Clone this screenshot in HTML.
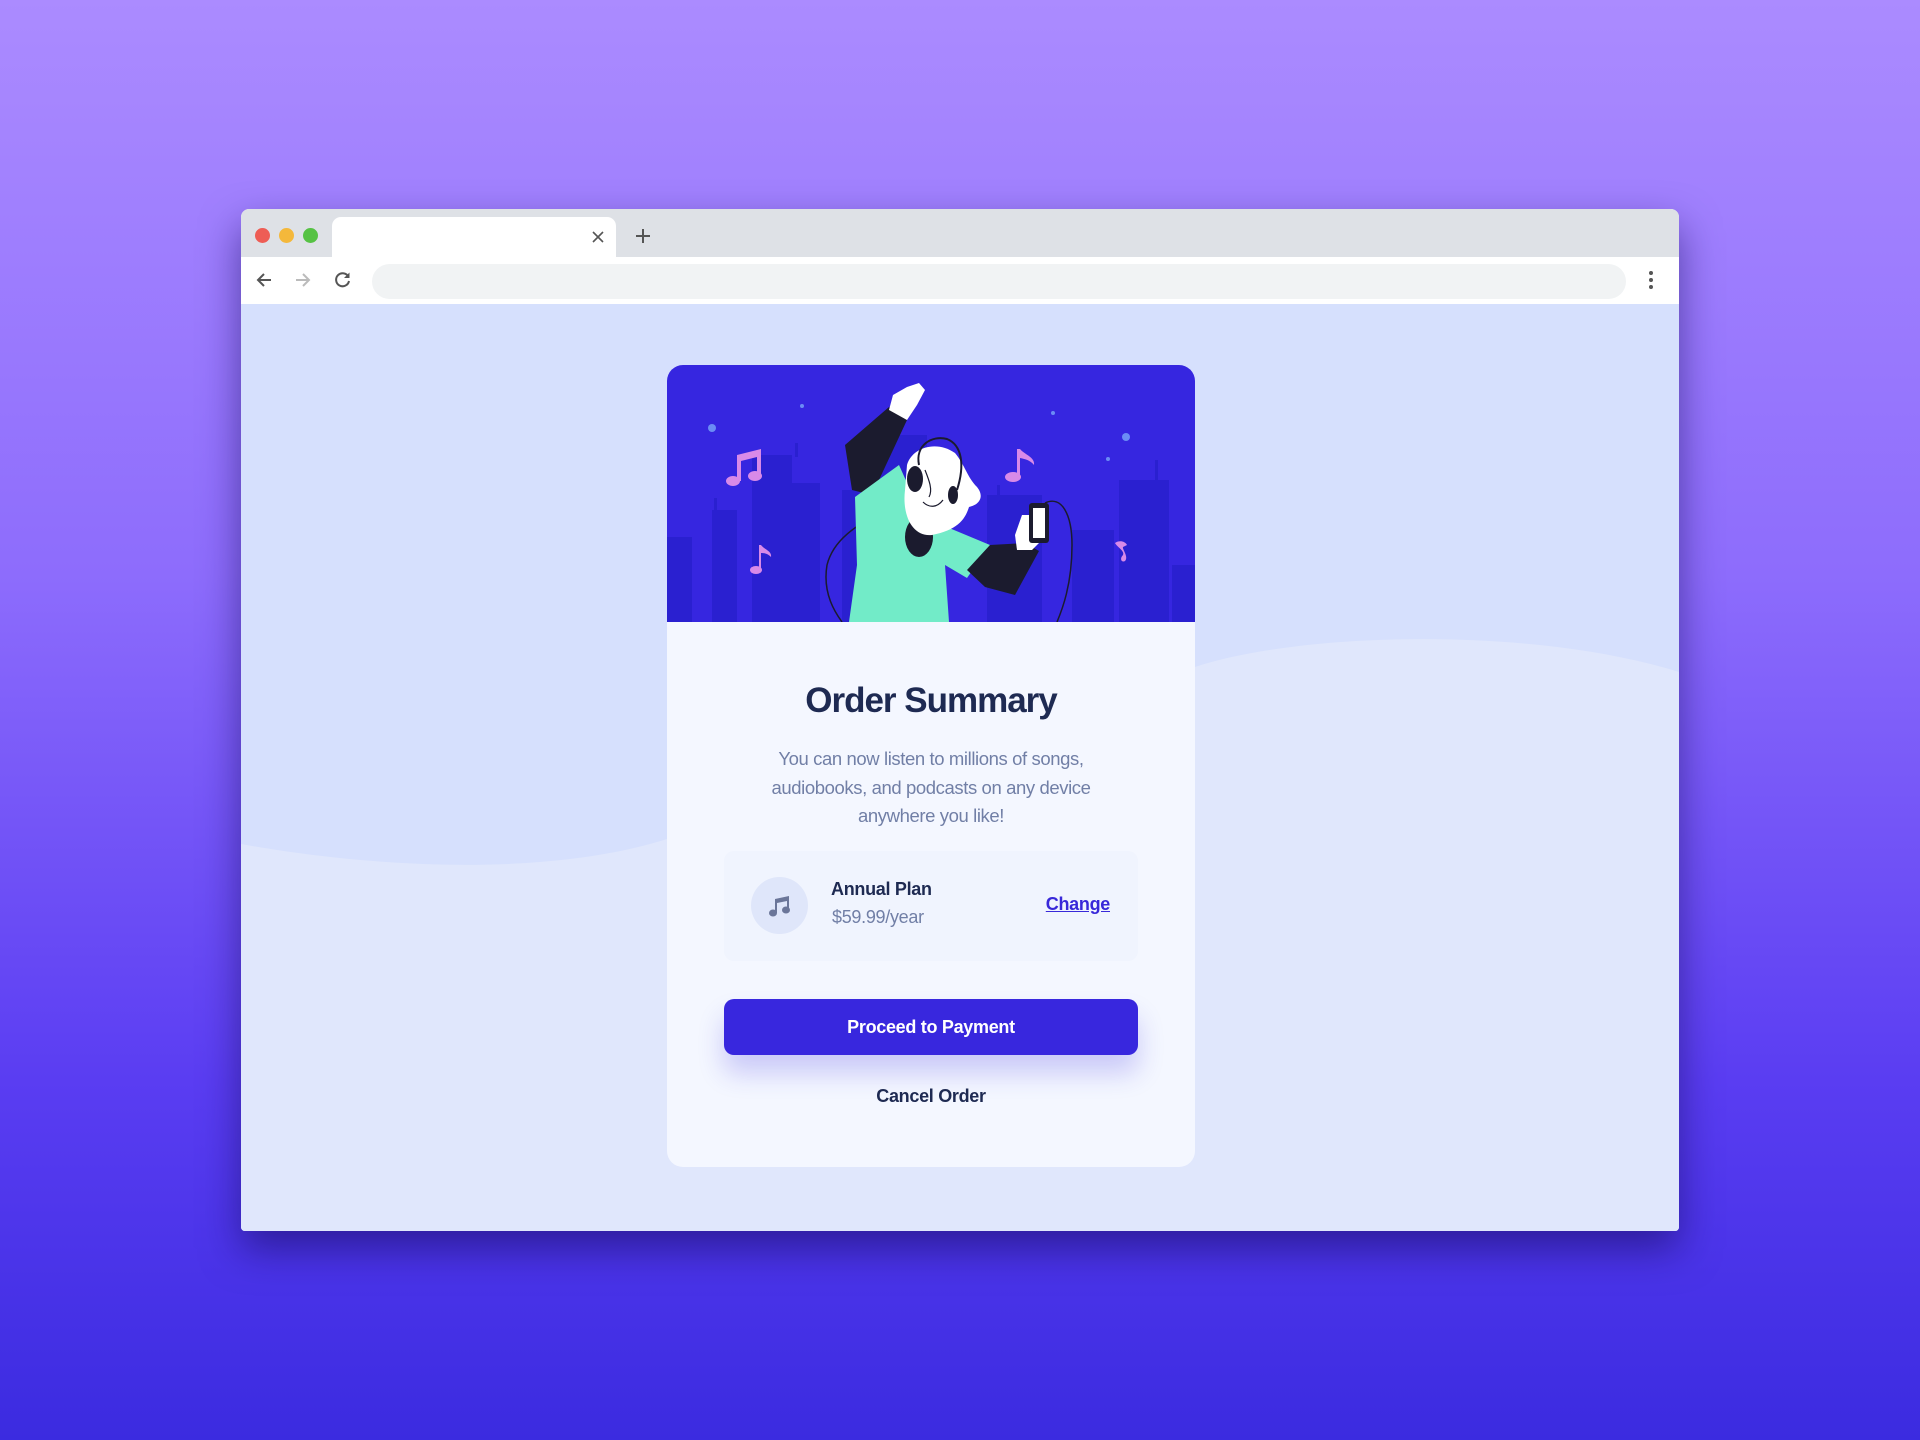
<!DOCTYPE html>
<html><head><meta charset="utf-8">
<style>
*{margin:0;padding:0;box-sizing:border-box}
html,body{width:1920px;height:1440px;overflow:hidden}
body{background:linear-gradient(180deg,#ab8bff 0%,#8d6cfc 40%,#5a3df2 75%,#3b2be0 100%);font-family:"Liberation Sans",sans-serif;position:relative}
.win{position:absolute;left:241px;top:209px;width:1438px;height:1022px;background:#e0e7fc;border-radius:8px 8px 4px 4px;overflow:hidden;box-shadow:0 18px 40px rgba(20,10,90,.55)}
.tabbar{position:absolute;left:0;top:0;width:100%;height:48px;background:#dee1e6}
.dot{position:absolute;top:19px;width:15px;height:15px;border-radius:50%}
.tab{position:absolute;left:91px;top:8px;width:284px;height:40px;background:#fff;border-radius:9px 9px 0 0}
.nav{position:absolute;left:0;top:48px;width:100%;height:47px;background:#fff}
.addr{position:absolute;left:131px;top:7px;width:1254px;height:35px;background:#f1f3f4;border-radius:18px}
.content{position:absolute;left:0;top:95px;width:1438px;height:927px;background:#d6e0fd}
.card{position:absolute;left:667px;top:365px;width:528px;height:802px;background:#f4f7ff;border-radius:16px;overflow:hidden;text-align:center}
h1{position:absolute;top:681px;left:667px;width:528px;text-align:center;font-size:35px;font-weight:bold;color:#1e2a52;letter-spacing:-1px}
.p{position:absolute;top:745px;left:667px;width:528px;text-align:center;font-size:18.5px;line-height:28.5px;color:#717fa6;letter-spacing:-0.4px}
.plan{position:absolute;left:724px;top:851px;width:414px;height:110px;background:#f0f4fe;border-radius:10px}
.ic{position:absolute;left:27px;top:26px;width:57px;height:57px;border-radius:50%;background:#dfe6fa}
.pt{position:absolute;left:107px;top:28px;font-size:18px;font-weight:bold;color:#1e2a52;letter-spacing:-0.3px}
.pp{position:absolute;left:108px;top:56px;font-size:18px;color:#717fa6;letter-spacing:-0.3px}
.ch{position:absolute;right:28px;top:43px;font-size:18px;font-weight:bold;color:#3828d9;text-decoration:underline;letter-spacing:-0.3px}
.btn{position:absolute;left:724px;top:999px;width:414px;height:56px;background:#3827de;border-radius:10px;color:#fff;font-size:18px;font-weight:bold;line-height:56px;text-align:center;box-shadow:0 18px 26px rgba(56,39,222,.22);letter-spacing:-0.3px}
.cancel{position:absolute;left:724px;top:1086px;width:414px;text-align:center;font-size:18px;font-weight:bold;color:#1e2a52;letter-spacing:-0.3px}
</style></head><body>
<div class="win">
 <div class="tabbar">
  <div class="dot" style="left:14px;background:#ee5d55"></div>
  <div class="dot" style="left:38px;background:#f4b83b"></div>
  <div class="dot" style="left:62px;background:#56c244"></div>
  <div class="tab"><svg style="position:absolute;left:260px;top:14px" width="12" height="12" viewBox="0 0 12 12"><path d="M1 1L11 11M11 1L1 11" stroke="#555" stroke-width="1.6"/></svg></div>
  <svg style="position:absolute;left:394px;top:19px" width="16" height="16" viewBox="0 0 16 16"><path d="M8 1V15M1 8H15" stroke="#555" stroke-width="2"/></svg>
 </div>
 <div class="nav">
  <svg style="position:absolute;left:14px;top:14px" width="18" height="18" viewBox="0 0 18 18"><path d="M16 9H3M9 3L3 9L9 15" stroke="#555" stroke-width="2" fill="none"/></svg>
  <svg style="position:absolute;left:53px;top:14px" width="18" height="18" viewBox="0 0 18 18"><path d="M2 9H15M9 3L15 9L9 15" stroke="#bbb" stroke-width="2" fill="none"/></svg>
  <svg style="position:absolute;left:93px;top:14px" width="18" height="18" viewBox="0 0 18 18"><path d="M14.5 6A6.5 6.5 0 1 0 15 10" stroke="#555" stroke-width="2" fill="none"/><path d="M15.5 1.5V7H10Z" fill="#555"/></svg>
  <div class="addr"></div>
  <svg style="position:absolute;left:1407px;top:13px" width="6" height="20" viewBox="0 0 6 20"><circle cx="3" cy="3" r="2" fill="#555"/><circle cx="3" cy="10" r="2" fill="#555"/><circle cx="3" cy="17" r="2" fill="#555"/></svg>
 </div>
 <div class="content">
  <svg width="1438" height="927" viewBox="0 0 1438 927" style="position:absolute;left:0;top:0"><path d="M0,540 C120,562 300,575 426,535 L954,363 C1060,328 1290,322 1438,368 L1438,927 L0,927 Z" fill="#e0e7fc"/></svg>
 </div>
</div>
<div class="card">
 <svg width="528" height="257" viewBox="0 0 528 257" style="display:block">
  <rect width="528" height="257" fill="#3626e0"/>
  <g fill="#2a20d0">
   <rect x="0" y="172" width="25" height="85"/>
   <rect x="45" y="145" width="25" height="112"/><rect x="47" y="133" width="3" height="14"/>
   <rect x="85" y="90" width="40" height="167"/><rect x="118" y="118" width="35" height="139"/><rect x="128" y="78" width="3" height="14"/>
   <rect x="175" y="125" width="28" height="132"/>
   <rect x="200" y="70" width="60" height="187"/>
   <rect x="320" y="130" width="55" height="127"/><rect x="330" y="120" width="3" height="12"/>
   <rect x="405" y="165" width="42" height="92"/>
   <rect x="452" y="115" width="50" height="142"/><rect x="488" y="95" width="3" height="22"/>
   <rect x="505" y="200" width="23" height="57"/>
  </g>
  <g fill="#6b8cf5"><circle cx="45" cy="63" r="4"/><circle cx="135" cy="41" r="2"/><circle cx="386" cy="48" r="2"/><circle cx="459" cy="72" r="4"/><circle cx="441" cy="94" r="2"/></g>
  <g fill="#d88ae8">
   <ellipse cx="66" cy="116" rx="7" ry="5"/><ellipse cx="88" cy="111" rx="7" ry="5"/>
   <path d="M70 116V90L94 84V111H90V92L74 96V116Z"/>
   <ellipse cx="346" cy="112" rx="8" ry="5"/><path d="M350 112V84L353 84C358 90 368 92 367 100C363 95 358 94 353 93V112Z"/>
   <ellipse cx="89" cy="205" rx="6" ry="4"/><path d="M92 205V180L94 180C98 185 105 186 104 192C101 189 98 188 94 188V205Z"/>
   <path d="M448 178C452 175 458 176 460 180L456 182C455 184 462 192 458 196C455 198 452 194 456 190C458 186 450 182 448 178Z"/>
  </g>
  <path d="M246 125C220 150 170 160 160 200C155 230 170 250 175 257" stroke="#1b1b2e" stroke-width="1.5" fill="none"/>
  <path d="M378 138C395 130 405 150 405 180C405 220 395 245 390 257" stroke="#1b1b2e" stroke-width="1.5" fill="none"/>
  <path d="M222 42L240 55L205 130L185 125L178 80Z" fill="#1b1b2e"/>
  <path d="M222 45L226 30L240 22L252 18L258 25L250 40L240 55Z" fill="#fff"/>
  <path d="M188 132L232 100L250 140L275 160L323 180L300 213L278 200L282 257L182 257L190 200Z" fill="#72ebc8"/>
  <path d="M300 205L323 180L358 178L372 186L348 230L318 222Z" fill="#1b1b2e"/>
  <ellipse cx="252" cy="172" rx="14" ry="20" fill="#1b1b2e"/>
  <path d="M240 100C245 82 270 75 288 88C298 100 300 112 310 122C318 132 312 140 302 142C298 155 290 165 265 170C245 172 235 150 238 125Z" fill="#fff"/>
  <path d="M258 105C262 115 266 125 262 132" stroke="#1b1b2e" stroke-width="1.2" fill="none"/>
  <path d="M256 137C262 143 270 143 276 135" stroke="#1b1b2e" stroke-width="1.2" fill="none"/>
  <path d="M252 100C248 80 265 70 280 74C295 80 298 100 290 125" stroke="#1b1b2e" stroke-width="2" fill="none"/>
  <ellipse cx="248" cy="114" rx="8" ry="13" fill="#1b1b2e"/>
  <ellipse cx="286" cy="130" rx="5" ry="9" fill="#1b1b2e"/>
  <path d="M348 170L355 150L372 150L375 175L365 185L350 185Z" fill="#fff"/>
  <rect x="362" y="138" width="20" height="40" rx="3" fill="#1b1b2e"/>
  <rect x="366" y="143" width="12" height="30" fill="#fff"/>
 </svg>
</div>
<h1>Order Summary</h1>
<div class="p">You can now listen to millions of songs,<br>audiobooks, and podcasts on any device<br>anywhere you like!</div>
<div class="plan">
 <div class="ic"><svg style="position:absolute;left:17px;top:17px" width="24" height="24" viewBox="0 0 24 24"><ellipse cx="5" cy="19" rx="4" ry="3.5" fill="#6b7699"/><ellipse cx="18" cy="16" rx="4" ry="3.5" fill="#6b7699"/><path d="M7 19V5L21 2V16H19V7L9 9V19Z" fill="#6b7699"/></svg></div>
 <div class="pt">Annual Plan</div>
 <div class="pp">$59.99/year</div>
 <div class="ch">Change</div>
</div>
<div class="btn">Proceed to Payment</div>
<div class="cancel">Cancel Order</div>
</body></html>
